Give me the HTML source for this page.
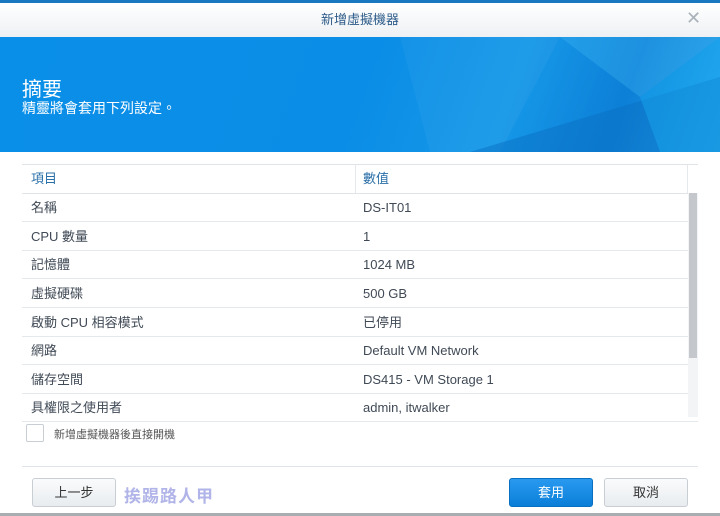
<html><head><style>
body{margin:0;width:720px;height:516px;overflow:hidden;background:#fff;font-family:"Liberation Sans","Noto Sans CJK TC",sans-serif;position:relative}
.a{position:absolute}
.row{position:absolute;left:22px;width:666px;height:28px;border-bottom:1px solid #e6e9ec;font-size:13px;color:#404a56;line-height:29px}
.row span{position:absolute;left:9px}.row b{font-weight:normal;position:absolute;left:341px}
.btn{position:absolute;top:478px;height:27px;border:1px solid #c8ced4;border-radius:3px;background:linear-gradient(#fafbfc,#e8ecef);font-size:13px;color:#333;text-align:center;line-height:27px}
</style></head><body>
<div class="a" style="left:0;top:0;width:720px;height:3px;background:#1a78c0"></div>
<div class="a" style="left:0;top:3px;width:720px;height:34px;background:linear-gradient(#fff,#eef1f4);text-align:center;line-height:34px;font-size:13px;color:#2b5a88">新增虛擬機器</div>
<div class="a" style="left:686px;top:8px;font-size:18px;color:#aab2ba">✕</div>
<div class="a" style="left:0;top:37px;width:720px;height:115px;background:linear-gradient(110deg,#0a8fe8 0%,#0a8de6 50%,#1698e8 70%,#0c7fd6 85%,#2aa6ee 100%);overflow:hidden">
<svg width="720" height="115" style="position:absolute;left:0;top:0"><polygon points="400,0 560,0 500,115 430,115" fill="#fff" opacity="0.04"/><polygon points="470,115 720,40 720,115" fill="#0a6fc4" opacity="0.5"/><polygon points="640,60 720,0 720,115 660,115" fill="#1ab0f2" opacity="0.4"/><polygon points="560,0 720,0 640,60" fill="#3fb4f0" opacity="0.35"/></svg>
<div class="a" style="left:22px;top:36px;font-size:20px;color:#fff">摘要</div>
<div class="a" style="left:22px;top:61px;font-size:14px;color:#fff">精靈將會套用下列設定。</div>
</div>
<div class="a" style="left:22px;top:164px;width:676px;height:28px;border-top:1px solid #e0e4e8;border-bottom:1px solid #e0e4e8;font-size:13px;color:#2a6fa8;line-height:28px"><span class="a" style="left:9px">項目</span><span class="a" style="left:333px;top:0;height:28px;border-left:1px solid #e6e9ec"></span><span class="a" style="left:341px">數值</span><span class="a" style="left:665px;top:0;height:28px;border-left:1px solid #e6e9ec"></span></div>
<div class="a" style="left:688px;top:193px;width:10px;height:224px;background:#f3f4f5"></div>
<div class="a" style="left:689px;top:193px;width:8px;height:165px;background:#c4c8cc"></div>
<div class="row" style="top:193px"><span>名稱</span><b>DS-IT01</b></div>
<div class="row" style="top:222px"><span>CPU 數量</span><b>1</b></div>
<div class="row" style="top:250px"><span>記憶體</span><b>1024 MB</b></div>
<div class="row" style="top:279px"><span>虛擬硬碟</span><b>500 GB</b></div>
<div class="row" style="top:308px"><span>啟動 CPU 相容模式</span><b>已停用</b></div>
<div class="row" style="top:336px"><span>網路</span><b>Default VM Network</b></div>
<div class="row" style="top:365px"><span>儲存空間</span><b>DS415 - VM Storage 1</b></div>
<div class="row" style="top:393px;width:676px"><span>具權限之使用者</span><b>admin, itwalker</b></div>
<div class="a" style="left:26px;top:424px;width:16px;height:16px;border:1px solid #c8ced4;border-radius:2px"></div>
<div class="a" style="left:54px;top:426px;font-size:11px;color:#555">新增虛擬機器後直接開機</div>
<div class="a" style="left:22px;top:466px;width:676px;height:1px;background:#e0e4e8"></div>
<div class="btn" style="left:32px;width:82px">上一步</div>
<div class="a" style="left:124px;top:482px;font-size:17px;color:#b0b4e8;font-weight:bold;letter-spacing:1px">挨踢路人甲</div>
<div class="btn" style="left:509px;width:82px;background:linear-gradient(#2a9af0,#0a7fd8);border-color:#0b6fc0;color:#fff">套用</div>
<div class="btn" style="left:604px;width:82px">取消</div>
<div class="a" style="left:0;top:513px;width:720px;height:3px;background:#a8adb2"></div>
</body></html>
